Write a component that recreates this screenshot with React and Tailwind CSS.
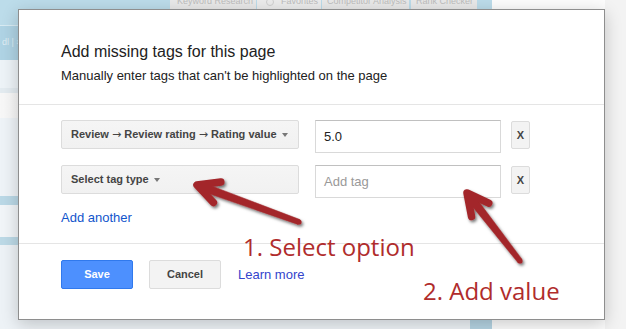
import React from "react";

function Arrow({ tip, tail, len = 24, ang = 27 }) {
  const dx = tail[0] - tip[0];
  const dy = tail[1] - tip[1];
  const d = Math.hypot(dx, dy);
  const ux = dx / d, uy = dy / d;
  const px = -uy, py = ux;
  const c = Math.cos((ang * Math.PI) / 180) * len;
  const s = Math.sin((ang * Math.PI) / 180) * len;
  const a1 = [tip[0] + ux * c + px * s, tip[1] + uy * c + py * s];
  const a2 = [tip[0] + ux * c - px * s, tip[1] + uy * c - py * s];
  const wh = 4.2, wt = 2.6;
  const h = [tip[0] + ux * 4, tip[1] + uy * 4];
  const poly = [
    [h[0] + px * wh, h[1] + py * wh],
    [tail[0] + px * wt, tail[1] + py * wt],
    [tail[0] - px * wt, tail[1] - py * wt],
    [h[0] - px * wh, h[1] - py * wh],
  ]
    .map((p) => p.join(","))
    .join(" ");
  return (
    <g filter="url(#sh)" fill="#a3272a" stroke="#a3272a" strokeLinecap="round" strokeLinejoin="round">
      <polygon points={poly} strokeWidth="0.5" />
      <circle cx={tail[0]} cy={tail[1]} r={wt} stroke="none" />
      <polyline fill="none" points={`${a1[0]},${a1[1]} ${tip[0]},${tip[1]} ${a2[0]},${a2[1]}`} strokeWidth="7.5" />
    </g>
  );
}

function Caret() {
  return <span className="ml-[5px] inline-block h-0 w-0 border-l-[3.5px] border-r-[3.5px] border-t-[4px] border-l-transparent border-r-transparent border-t-[#777]" />;
}

function Ar() {
  return <span className="font-['DejaVu_Sans',sans-serif] font-normal">→</span>;
}

function TagRow({ label, value, placeholder }) {
  return (
    <div className="flex items-start">
      <button className="flex h-[29px] w-[238px] items-center whitespace-pre rounded-[2px] border border-[#dcdcdc] bg-gradient-to-b from-[#f5f5f5] to-[#f1f1f1] pl-[9px] text-[11px] font-bold text-[#444]">
        <span>{label}</span>
        <Caret />
      </button>
      <div className="ml-[16px] flex h-[33px] w-[186px] items-center border border-[#d9d9d9] border-t-[#c0c0c0] pl-[8px] text-[13px]">
        {value ? <span className="text-[#222]">{value}</span> : <span className="text-[#999]">{placeholder}</span>}
      </div>
      <button className="ml-[10px] mt-px flex h-[28px] w-[19px] items-center justify-center rounded-[2px] border border-[#dcdcdc] bg-[#f3f3f3] text-[11px] font-bold text-[#444]">
        X
      </button>
    </div>
  );
}

function Tab({ w, children }) {
  return (
    <div className={`flex overflow-hidden whitespace-nowrap bg-[#e9e9e9] ${w}`}>
      <div className="-mt-[3px] flex items-center pl-[7px]">{children}</div>
    </div>
  );
}

export default function App() {
  return (
    <div className="relative h-[329px] w-[626px] overflow-hidden bg-[#f4f4f4] font-['Liberation_Sans',Arial,sans-serif]">
      {/* washed-out page behind the modal */}
      <div className="flex h-full w-full">
        <div className="flex w-[492px] flex-col">
          <div className="flex h-[25px] bg-[#bcdcea]">
            <div className="w-[170px]" />
            <div className="flex h-[14px] gap-px text-[9px] leading-[9px] text-[#bdbdbd]">
              <div className="flex w-[86px] overflow-hidden whitespace-nowrap bg-[#e9e9e9] pl-[7px]"><div className="-mt-[3px]">Keyword Research</div></div>
              <div className="flex w-[64px] overflow-hidden whitespace-nowrap bg-[#ececec] pl-[9px]"><span className="-mt-[2px] mr-[7px] inline-block h-[8px] w-[8px] rounded-full border border-[#d0d0d0]" /><div className="-mt-[3px]">Favorites</div></div>
              <div className="flex w-[87px] overflow-hidden whitespace-nowrap bg-[#e9e9e9] pl-[5px]"><div className="-mt-[3px]">Competitor Analysis</div></div>
              <div className="ml-px flex w-[66px] overflow-hidden whitespace-nowrap bg-[#e9e9e9] pl-[5px]"><div className="-mt-[3px]">Rank Checker</div></div>
            </div>
            <div className="flex-1" />
          </div>
          <div className="flex flex-1">
            <div className="flex flex-1 flex-col">
              <div className="h-px bg-[#d8ebf3]" />
              <div className="flex h-[34px] items-center bg-[#afd3e4] pl-[2px] text-[9px] text-white/60">dl | ≡</div>
              <div className="h-[28px] bg-[#edf3f7]" />
              <div className="h-[5px] bg-[#e3ebf0]" />
              <div className="h-[25px] bg-gradient-to-r from-[#f7f7f7] to-white" />
              <div className="h-[78px] bg-[#eef3f7]" />
              <div className="h-[9px] bg-[#bad8e6]" />
              <div className="h-[32px] bg-[#f1f5f8]" />
              <div className="h-[8px] bg-[#bcd9e6]" />
              <div className="flex-1 bg-[#edf2f6]" />
            </div>
            <div className="w-[22px] bg-[#b5d4e3]" />
          </div>
        </div>
        <div className="flex-1 bg-[#fcfcfc]" />
        <div className="w-[21px] bg-[#f3f3f3]" />
      </div>

      {/* modal dialog */}
      <div className="absolute left-[18px] top-[9px] flex h-[311px] w-[587px] flex-col border border-[#8e8e8e] bg-white text-[#222] shadow-[0_4px_16px_rgba(0,0,0,0.2)]">
        <div className="border-b border-[#e5e5e5] pb-[19px] pl-[42px] pt-[32px]">
          <div className="text-[16px] leading-[20px]">Add missing tags for this page</div>
          <div className="mt-[5px] text-[13px] leading-[18px]">Manually enter tags that can't be highlighted on the page</div>
        </div>
        <div className="flex flex-col border-b border-[#e5e5e5] pb-[16px] pl-[42px] pt-[15px]">
          <div className="flex flex-col gap-[12px]">
            <TagRow label={<>Review <Ar /> Review rating <Ar /> Rating value</>} value="5.0" />
            <TagRow label="Select tag type" placeholder="Add tag" />
          </div>
          <div className="mt-[11px] text-[13px] leading-[18px] text-[#15c]">Add another</div>
        </div>
        <div className="flex items-center pl-[42px] pt-[16px]">
          <button className="h-[29px] w-[72px] rounded-[2px] border border-[#3079ed] bg-[#4d90fe] text-[11px] font-bold text-white">Save</button>
          <button className="ml-[16px] h-[29px] w-[72px] rounded-[2px] border border-[#dcdcdc] bg-[#f3f3f3] text-[11px] font-bold text-[#444]">Cancel</button>
          <span className="ml-[17px] text-[13px] leading-[18px] text-[#3344cc]">Learn more</span>
        </div>
      </div>

      {/* annotations */}
      <svg className="pointer-events-none absolute left-0 top-0" width="626" height="329">
        <defs>
          <filter id="sh" x="-20%" y="-20%" width="140%" height="140%">
            <feDropShadow dx="1.5" dy="2" stdDeviation="1.6" floodColor="#000" floodOpacity="0.55" />
          </filter>
        </defs>
        <Arrow tip={[197, 185]} tail={[299, 222]} />
        <Arrow tip={[467, 193]} tail={[520, 261]} />
      </svg>
      <div className="pointer-events-none absolute left-[243px] top-[235px] whitespace-nowrap font-['Open_Sans',sans-serif] text-[24px] leading-[24px] text-[#b02c2c]">1. Select option</div>
      <div className="pointer-events-none absolute left-[423px] top-[279px] whitespace-nowrap font-['Open_Sans',sans-serif] text-[24px] leading-[24px] text-[#b02c2c]">2. Add value</div>
    </div>
  );
}
